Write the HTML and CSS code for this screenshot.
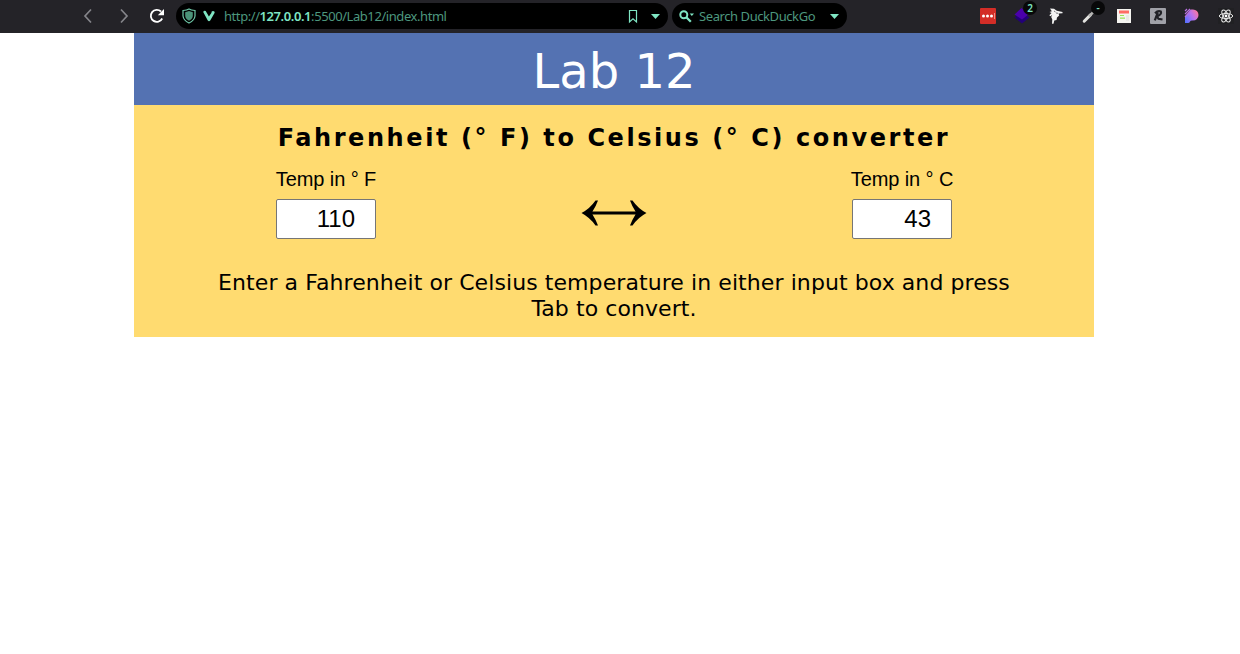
FILE: index.html
```html
<!DOCTYPE html>
<html lang="en">
<head>
<meta charset="utf-8">
<title>Lab 12</title>
<link rel="stylesheet" href="styles.css">
</head>
<body>
<nav class="toolbar">
  <div class="nav-icons">
    <svg width="10" height="16" viewBox="0 0 10 16"><path d="M8 1.500 2 8l6 6.500" fill="none" stroke="#85858a" stroke-width="1.700"/></svg>
    <svg width="10" height="16" viewBox="0 0 10 16"><path d="M2 1.500 8 8l-6 6.500" fill="none" stroke="#85858a" stroke-width="1.700"/></svg>
    <svg width="16" height="16" viewBox="0 0 16 16"><path d="M13.200 10.500A6 6 0 1 1 12 3.500" fill="none" stroke="#fff" stroke-width="1.800"/><path d="M15 1v6.200H8.800Z" fill="#fff"/></svg>
  </div>
  <div class="address">
    <svg class="shield" width="14" height="16" viewBox="0 0 14 16"><path d="M1 2.500Q5 2.300 7 1Q9 2.300 13 2.500V8Q12.500 12.500 7 15Q1.500 12.500 1 8Z" fill="none" stroke="#6fc9a9" stroke-width="1.200"/><path d="M3.200 4.200 7 3l3.800 1.200V8Q10.500 11 7 12.800Q3.500 11 3.200 8Z" fill="#4b9479"/></svg>
    <svg class="vmark" width="12" height="12" viewBox="0 0 12 12"><path d="M.2 2Q1 0 2.700 1.100L5.900 6.500 8.400 3.100Q8.200 1 10 .9 11.900 1 11.700 2.800L7.200 10.400Q6 11.900 4.800 10.400Z" fill="#7fe5c3"/></svg>
    <span class="url">http://<b>127.0.0.1</b>:5500/Lab12/index.html</span>
    <svg class="bookmark" width="10" height="15" viewBox="0 0 10 15"><path d="M1.500 1.500h7v11.500L5 9.800 1.500 13Z" fill="none" stroke="#7fe5c3" stroke-width="1.200"/></svg>
    <svg class="caret" width="9" height="5" viewBox="0 0 9 5"><path d="M0 0h9L4.500 5Z" fill="#7fe5c3"/></svg>
  </div>
  <div class="search">
    <svg width="15" height="13" viewBox="0 0 15 13"><circle cx="4.800" cy="4.800" r="3.500" fill="none" stroke="#7fe5c3" stroke-width="2"/><path d="m7.300 7.300 4.500 4.500" stroke="#7fe5c3" stroke-width="2.300"/><path d="M10.700 3.500h4.300l-2.150 2.500Z" fill="#7fe5c3"/></svg>
    <span class="search-text">Search DuckDuckGo</span>
    <svg class="caret" width="9" height="5" viewBox="0 0 9 5"><path d="M0 0h9L4.500 5Z" fill="#7fe5c3"/></svg>
  </div>
  <div class="extensions">
    <span class="ext"><svg width="16" height="16" viewBox="0 0 16 16"><rect width="16" height="16" rx="1" fill="#d32d27"/><g fill="#fff"><circle cx="3.500" cy="8" r="1.500"/><circle cx="7.500" cy="8" r="1.500"/><circle cx="11.500" cy="8" r="1.500"/></g><path d="M14.500 5v6" stroke="#f08a80"/></svg></span>
    <span class="ext"><svg width="16" height="16" viewBox="0 0 16 16"><path d="m8 4 7.500 5.500L8 15.500.5 9.500Z" fill="#230078"/><path d="m7.500 0 7.500 6-7 5.500-7.500-5Z" fill="#4a00ac"/></svg><span class="badge">2</span></span>
    <span class="ext"><svg width="16" height="16" viewBox="0 0 16 16"><path d="M2 .5 6 .8 8.800 2.800 14.500 4V5.200L10.500 5.600 11.200 7.500 9 9.500 8.500 12 6.300 12.500 5.500 15.800H4L4.300 11.500 3.200 9 4.300 6.800 2.500 8.200 1.300 7.200 3.500 5 1.500 4 3.800 3.200Z" fill="#f5f5f5"/><path d="m8 5 2 .3M6 3l1.500 1" stroke="#77777c"/></svg></span>
    <span class="ext"><svg width="16" height="16" viewBox="0 0 16 16"><path d="m2.200 13.200 6.300-6.300" stroke="#e2e2df" stroke-width="3" stroke-linecap="round"/><path d="m7 8.400 4-4" stroke="#b5b5b3" stroke-width="2.600"/></svg><span class="badge">-</span></span>
    <span class="ext"><svg width="16" height="16" viewBox="0 0 16 16"><rect x="1" y="1" width="14" height="14" fill="#f5f4f0"/><path d="M3 2.500h10v3H3z" fill="#ff6c64"/><path d="M4 7.500h4M4 10.200h5" stroke="#9ce158" stroke-width="1.200"/><path d="M10 7h3v6h-3z" fill="#e9e9e6"/></svg></span>
    <span class="ext"><svg width="16" height="16" viewBox="0 0 16 16"><rect width="16" height="16" rx="1" fill="#a0a1a8"/><path d="M5 5.200Q8 2.200 10.800 3.500 12 6.500 7 8.500L8.500 10.800 12.500 11.500M7.800 4.500 4.800 12.300" fill="none" stroke="#202126" stroke-width="2.200"/></svg></span>
    <span class="ext"><svg width="16" height="16" viewBox="0 0 16 16"><defs><linearGradient id="p" x1="0" x2="1" y1=".8" y2=".2"><stop stop-color="#5a70ff"/><stop offset=".55" stop-color="#ba72ed"/><stop offset="1" stop-color="#ff7898"/></linearGradient></defs><path d="M7 1.500h2a5.500 5.500 0 0 1 0 11H8q-1.500 0-2 1-.5 1.500-2 1.500H1V9Z" fill="url(#p)"/><path d="m1 3 2-2M1 6l5-5M1 9l6-7" stroke="#b670dc" stroke-width="1.200"/></svg></span>
    <span class="ext"><svg width="16" height="16" viewBox="0 0 16 16"><rect width="16" height="16" fill="#202023"/><g fill="none" stroke="#e7e7e7"><ellipse cx="8" cy="8" rx="6.700" ry="2.600"/><ellipse cx="8" cy="8" rx="6.700" ry="2.600" transform="rotate(60 8 8)"/><ellipse cx="8" cy="8" rx="6.700" ry="2.600" transform="rotate(120 8 8)"/></g><circle cx="8" cy="8" r="1.400" fill="#fff"/></svg></span>
  </div>
</nav>
<main class="page">
  <header class="title"><h1>Lab 12</h1></header>
  <section class="converter">
    <h2>Fahrenheit (° F) to Celsius (° C) converter</h2>
    <div class="fields">
      <label class="field">Temp in ° F<input type="text" value="110"></label>
      <svg class="arrow" width="66" height="26" viewBox="0 0 66 26"><path d="M8 13h50" stroke="#000" stroke-width="3"/><path d="M.5 13Q9 8.500 14.500 .5h2.500Q15 6 11.500 11.500v3Q15 20 17 25.500h-2.500Q9 17.500.5 13ZM65.500 13Q57 8.500 51.500 .5h-2.500q2 5.500 5.500 11v3Q51 20 49 25.500h2.500Q57 17.500 65.500 13Z"/></svg>
      <label class="field">Temp in ° C<input type="text" value="43"></label>
    </div>
    <p>Enter a Fahrenheit or Celsius temperature in either input box and press<br>Tab to convert.</p>
  </section>
</main>
</body>
</html>
```
FILE: styles.css
```css
* { box-sizing: border-box; }
body { margin: 0; background: #fff; overflow: hidden; font-family: "DejaVu Sans", Verdana, sans-serif; }
svg { display: block; flex: none; }
.toolbar { display: flex; align-items: center; height: 33px; background: #242328; font: 13px "Noto Sans", sans-serif; }
.nav-icons { display: flex; align-items: center; gap: 26px; width: 176px; padding-left: 83px; }
.nav-icons svg { margin-top: -1px; }
.nav-icons svg:last-child { margin-left: -6px; }
.address, .search { display: flex; align-items: center; height: 26px; margin-top: -1px; border-radius: 13px; background: #000; color: #4d977e; white-space: nowrap; }
.address { width: 492px; padding: 0 8px 0 6px; }
.vmark { margin-left: 7px; }
.url { margin-left: 9px; letter-spacing: -0.43px; }
.url b { color: #7fe5c3; font-weight: 600; }
.bookmark { margin-left: auto; }
.address .caret { margin-left: 13px; }
.search { width: 175px; margin-left: 4px; padding: 0 8px 0 7px; }
.search-text { margin-left: 5px; letter-spacing: -0.42px; }
.search .caret { margin-left: auto; }
.extensions { display: flex; gap: 18px; margin-top: -1px; margin-left: 133px; }
.ext { position: relative; width: 16px; height: 16px; }
.badge { position: absolute; top: -7px; left: 9px; width: 14px; height: 14px; border-radius: 50%; background: #080809; color: #7fe5c3; font: 600 10px/14px "Noto Sans", sans-serif; text-align: center; }
.page { width: 960px; margin-left: 134px; }
.title { height: 72px; background: #5472b2; color: #fff; text-align: center; }
.title h1 { margin: 0; font-size: 48px; font-weight: 400; line-height: 76px; }
.converter { height: 232px; padding-top: 18px; background: #ffdb70; text-align: center; }
.converter h2 { margin: 0; font-size: 24px; line-height: 30px; letter-spacing: 2.57px; }
.fields { display: flex; justify-content: space-between; width: 678px; margin: 14px auto 0; }
.field { display: flex; flex-direction: column; align-items: center; width: 102px; font: 20px/24px "Liberation Sans", Arial, sans-serif; white-space: nowrap; letter-spacing: -0.1px; }
.field input { width: 100px; height: 40px; margin-top: 8px; padding: 0 20px 0 0; border: 1px solid #767676; border-radius: 2px; background: #fff; font: 24px "Liberation Sans", Arial, sans-serif; text-align: right; }
.arrow { margin-top: 33px; margin-right: 1px; }
.converter p { margin: 31px 0 0; font-size: 22px; line-height: 26px; letter-spacing: 0.08px; }
```
